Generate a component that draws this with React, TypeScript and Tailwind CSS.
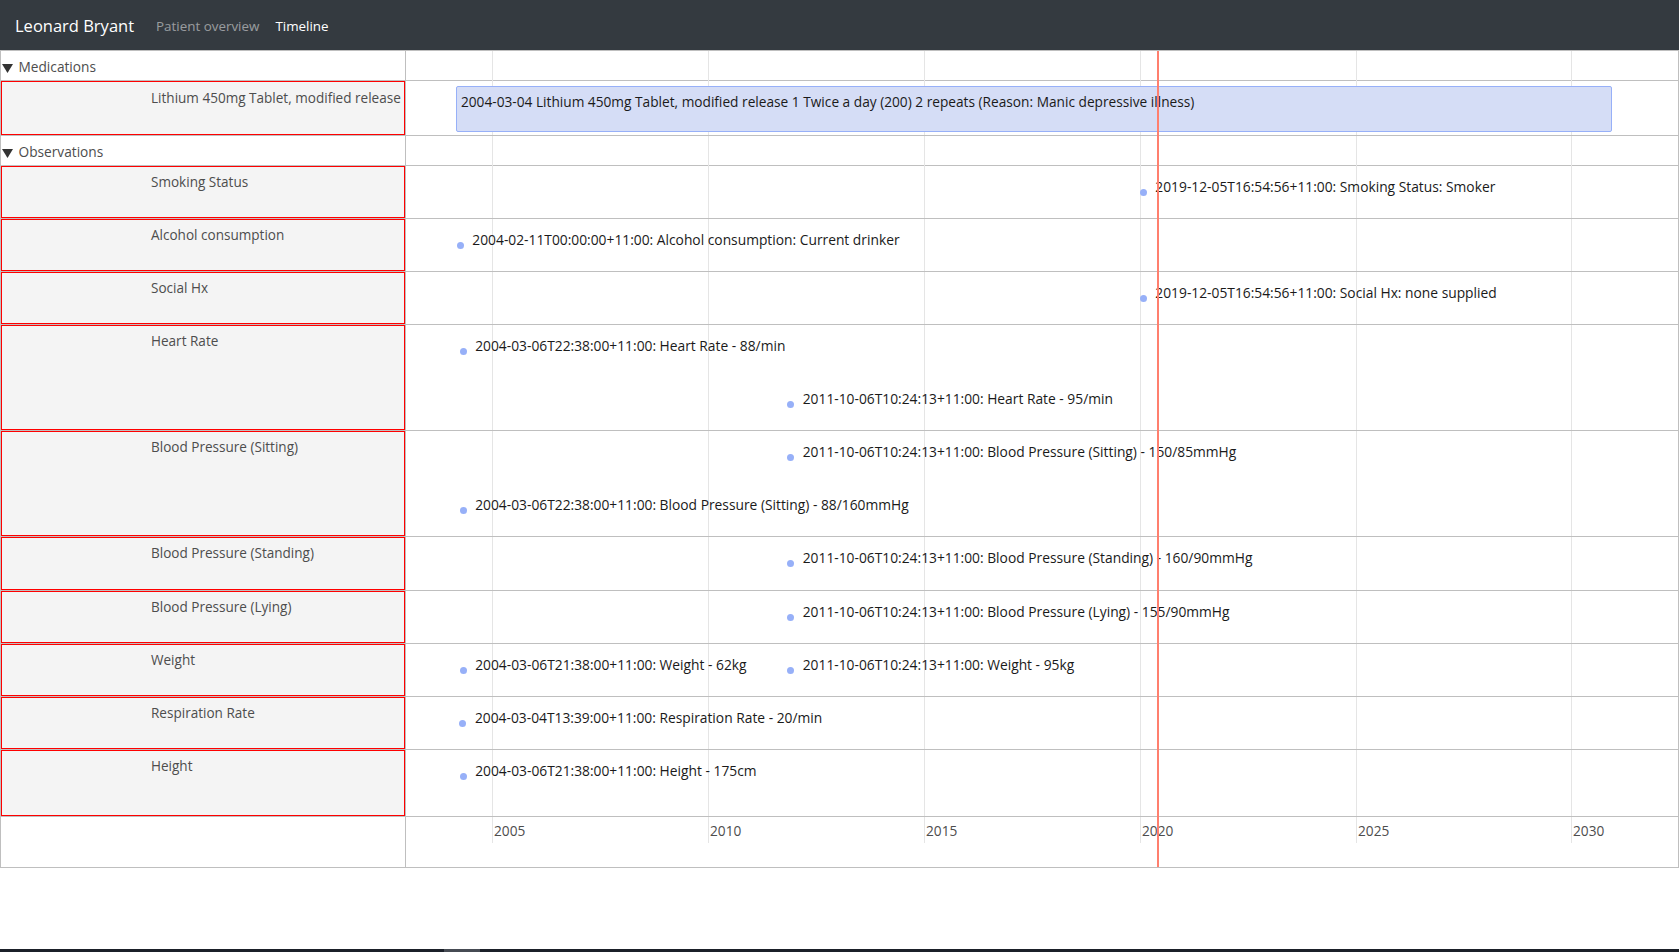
import React from "react";

type Item = { date: string; text: string; lane?: number };
type Row = { label: string; h: string; items: Item[] };

// pixel position of 2005-01-01 inside the item panel, and scale
const X2005 = 85.7;
const PX_YEAR = 43.19;

function xOf(date: string) {
  const [y, m, d] = date.split("-").map(Number);
  const start = Date.UTC(y, 0, 1);
  const end = Date.UTC(y + 1, 0, 1);
  const t = Date.UTC(y, m - 1, d);
  const frac = y + (t - start) / (end - start);
  return X2005 + (frac - 2005) * PX_YEAR;
}

const years = [2005, 2010, 2015, 2020, 2025, 2030];
const yearX = (y: number) => Math.round(X2005 + (y - 2005) * PX_YEAR);
const NOW_X = 751;

const observations: Row[] = [
  {
    label: "Smoking Status",
    h: "h-[53px]",
    items: [{ date: "2019-12-05", text: "2019-12-05T16:54:56+11:00: Smoking Status: Smoker" }],
  },
  {
    label: "Alcohol consumption",
    h: "h-[53px]",
    items: [{ date: "2004-02-11", text: "2004-02-11T00:00:00+11:00: Alcohol consumption: Current drinker" }],
  },
  {
    label: "Social Hx",
    h: "h-[53px]",
    items: [{ date: "2019-12-05", text: "2019-12-05T16:54:56+11:00: Social Hx: none supplied" }],
  },
  {
    label: "Heart Rate",
    h: "h-[106px]",
    items: [
      { date: "2004-03-06", text: "2004-03-06T22:38:00+11:00: Heart Rate - 88/min" },
      { date: "2011-10-06", text: "2011-10-06T10:24:13+11:00: Heart Rate - 95/min", lane: 1 },
    ],
  },
  {
    label: "Blood Pressure (Sitting)",
    h: "h-[106px]",
    items: [
      { date: "2011-10-06", text: "2011-10-06T10:24:13+11:00: Blood Pressure (Sitting) - 150/85mmHg" },
      { date: "2004-03-06", text: "2004-03-06T22:38:00+11:00: Blood Pressure (Sitting) - 88/160mmHg", lane: 1 },
    ],
  },
  {
    label: "Blood Pressure (Standing)",
    h: "h-[54px]",
    items: [{ date: "2011-10-06", text: "2011-10-06T10:24:13+11:00: Blood Pressure (Standing) - 160/90mmHg" }],
  },
  {
    label: "Blood Pressure (Lying)",
    h: "h-[53px]",
    items: [{ date: "2011-10-06", text: "2011-10-06T10:24:13+11:00: Blood Pressure (Lying) - 155/90mmHg" }],
  },
  {
    label: "Weight",
    h: "h-[53px]",
    items: [
      { date: "2004-03-06", text: "2004-03-06T21:38:00+11:00: Weight - 62kg" },
      { date: "2011-10-06", text: "2011-10-06T10:24:13+11:00: Weight - 95kg" },
    ],
  },
  {
    label: "Respiration Rate",
    h: "h-[53px]",
    items: [{ date: "2004-03-04", text: "2004-03-04T13:39:00+11:00: Respiration Rate - 20/min" }],
  },
  {
    label: "Height",
    h: "h-[67px]",
    items: [{ date: "2004-03-06", text: "2004-03-06T21:38:00+11:00: Height - 175cm" }],
  },
];

function GroupHeader({ title }: { title: string }) {
  return (
    <div className="flex h-[30px] items-start border-b border-[#bfbfbf] pl-px pt-[6px] text-[#4d4d4d]">
      <svg className="mt-[6.5px] shrink-0" width="11" height="9" viewBox="0 0 11 9">
        <polygon points="0,0 11,0 5.5,9" fill="#333333" />
      </svg>
      <span className="ml-[5.5px] leading-[20px]">{title}</span>
    </div>
  );
}

function Label({ label, h, pt }: { label: string; h: string; pt: string }) {
  return (
    <div className={`border-b border-[#bfbfbf] ${h}`}>
      <div
        className={`h-full border border-[#ff0000] bg-[#f4f4f4] pl-[149px] text-[13.55px] leading-[20px] text-[#4d4d4d] ${pt}`}
      >
        {label}
      </div>
    </div>
  );
}

function Point({ item }: { item: Item }) {
  const top = 11 + (item.lane ?? 0) * 53;
  return (
    <div className="absolute flex items-start whitespace-nowrap" style={{ left: xOf(item.date), top }}>
      <span className="ml-[3.5px] mt-[12px] h-[7px] w-[7px] shrink-0 rounded-full bg-[#97b0f8]" />
      <span className="ml-[8.5px] text-[13.8px] leading-[20px] text-[#1a1a1a]">{item.text}</span>
    </div>
  );
}

export default function App() {
  const medStart = xOf("2004-03-04");
  const medEnd = xOf("2030-12-06");

  return (
    <div className="flex h-screen flex-col bg-white font-['Open_Sans',sans-serif]">
      <nav className="flex h-[50px] shrink-0 items-center bg-[#343a40] pl-[15px] pt-[2px]">
        <span className="text-[16.5px] leading-[24px] text-white">Leonard Bryant</span>
        <div className="ml-[14px] flex text-[13.4px] leading-[20px]">
          <span className="px-2 text-white/50">Patient overview</span>
          <span className="px-2 text-white">Timeline</span>
        </div>
      </nav>

      <div className="flex border border-[#bfbfbf] text-[13.7px]">
        {/* labels */}
        <div className="w-[405px] shrink-0 border-r border-[#bfbfbf]">
          <GroupHeader title="Medications" />
          <Label label="Lithium 450mg Tablet, modified release" h="h-[55px]" pt="pt-[6px]" />
          <GroupHeader title="Observations" />
          {observations.map((r) => (
            <Label key={r.label} label={r.label} h={r.h} pt="pt-[5px]" />
          ))}
          <div className="h-[50px]" />
        </div>

        {/* items */}
        <div className="relative min-w-0 flex-1 overflow-hidden">
          <div className="relative">
            {years.map((y) => (
              <div key={y} className="absolute inset-y-0 w-px bg-[#e5e5e5]" style={{ left: yearX(y) }} />
            ))}
            <div className="h-[30px] border-b border-[#bfbfbf]" />
            <div className="relative h-[55px] border-b border-[#bfbfbf]">
              <div
                className="absolute top-[5px] h-[46px] overflow-hidden whitespace-nowrap rounded-[2px] border border-[#97b0f8] bg-[#d5ddf6] px-[4px] pb-[4px] pt-[5px] leading-[20px] text-[#1a1a1a]"
                style={{ left: medStart, width: medEnd - medStart }}
              >
                2004-03-04 Lithium 450mg Tablet, modified release 1 Twice a day (200) 2 repeats (Reason: Manic depressive illness)
              </div>
            </div>
            <div className="h-[30px] border-b border-[#bfbfbf]" />
            {observations.map((r) => (
              <div key={r.label} className={`relative border-b border-[#bfbfbf] ${r.h}`}>
                {r.items.map((it) => (
                  <Point key={it.text} item={it} />
                ))}
              </div>
            ))}
          </div>

          <div className="relative h-[50px]">
            {years.map((y) => (
              <div key={y} className="absolute top-0 h-[26px]" style={{ left: yearX(y) }}>
                <div className="h-full w-px bg-[#e5e5e5]" />
                <span className="absolute left-[2px] top-[4px] leading-[20px] text-[#4d4d4d]">{y}</span>
              </div>
            ))}
          </div>

          <div className="absolute inset-y-0 z-10 w-[2px] bg-[#ff7f6e]" style={{ left: NOW_X }} />
        </div>
      </div>

      <div className="mt-auto h-[3px] shrink-0 bg-[#1b2029] pl-[444px]">
        <div className="h-full w-[36px] bg-[#464b53]" />
      </div>
    </div>
  );
}
